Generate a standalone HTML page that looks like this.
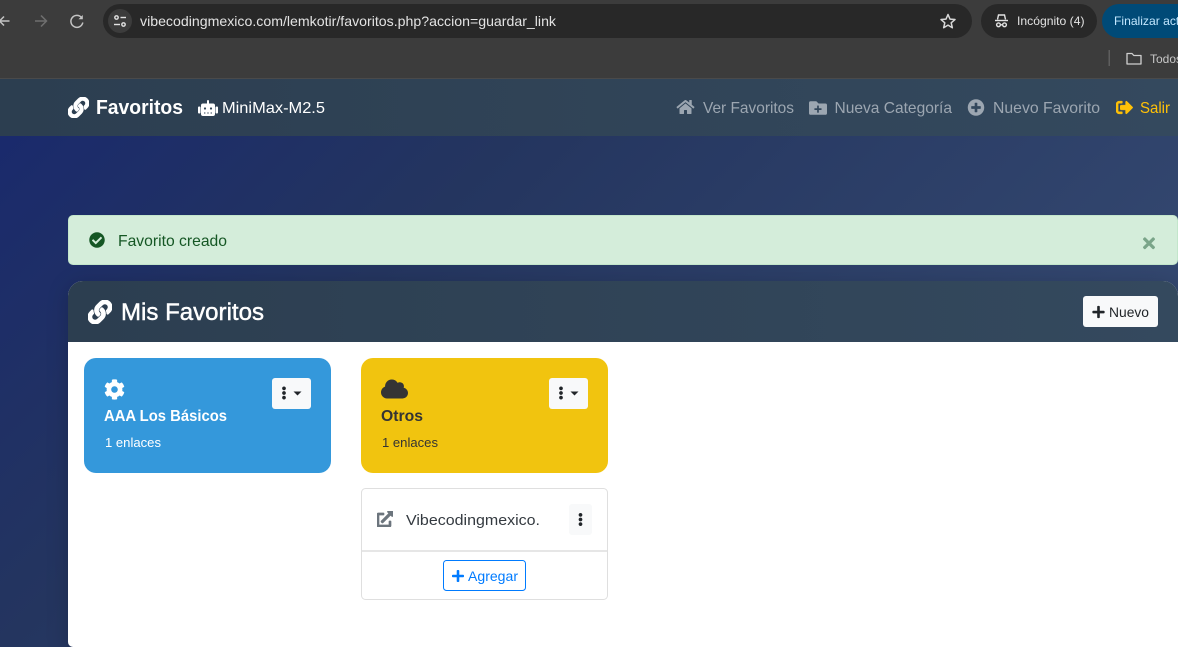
<!DOCTYPE html>
<html lang="es">
<head>
<meta charset="utf-8">
<title>Favoritos</title>
<style>
html,body{margin:0;padding:0;width:1178px;height:647px;overflow:hidden;background:#1a2a6c}
svg{display:block}
text{font-family:"Liberation Sans",sans-serif;white-space:pre}
</style>
</head>
<body>
<svg xmlns="http://www.w3.org/2000/svg" width="1178" height="647" viewBox="0 0 1178 647">
<defs>
<linearGradient id="pg" gradientUnits="userSpaceOnUse" x1="0" y1="136" x2="800" y2="936">
<stop offset="0" stop-color="#1a2a6c"/><stop offset=".32" stop-color="#24355f"/><stop offset=".82" stop-color="#33476f"/><stop offset="1" stop-color="#3a4f75"/>
</linearGradient>
<linearGradient id="nv" gradientUnits="userSpaceOnUse" x1="0" y1="0" x2="1178" y2="0">
<stop offset="0" stop-color="#2c3e50"/><stop offset="1" stop-color="#34495e"/>
</linearGradient>
<linearGradient id="hd" gradientUnits="userSpaceOnUse" x1="68" y1="0" x2="1178" y2="0">
<stop offset="0" stop-color="#2c3e50"/><stop offset="1" stop-color="#34495e"/>
</linearGradient>
</defs>

<!-- browser chrome -->
<rect width="1178" height="79" fill="#3c3c3c"/>
<rect y="78" width="1178" height="1" fill="#4a4a4a"/>
<path d="M9.5 21H0M4 16.5L-.5 21 4 25.5" fill="none" stroke="#c4c4c4" stroke-width="1.5"/>
<path d="M35 21H46M41 15.5L46.5 21 41 26.5" fill="none" stroke="#6f6f6f" stroke-width="1.5"/>
<path d="M81.5 17.5A6 6 0 1 0 82.8 22.5" fill="none" stroke="#c4c4c4" stroke-width="1.5"/>
<path d="M82.8 15V19.3H78.5Z" fill="#c4c4c4"/>
<rect x="103" y="4" width="869" height="34" rx="17" fill="#282828"/>
<circle cx="120" cy="21" r="12" fill="#3c3c3c"/>
<g fill="none" stroke="#e3e3e3" stroke-width="1.4"><circle cx="116.5" cy="17.5" r="1.7"/><path d="M120.5 17.5H126"/><circle cx="123.5" cy="24.5" r="1.7"/><path d="M114 24.5H120"/></g>
<text x="140" y="26" font-size="14" fill="#e3e3e3" textLength="416" lengthAdjust="spacingAndGlyphs">vibecodingmexico.com/lemkotir/favoritos.php?accion=guardar_link</text>
<path d="M948 14.5l2 4.600 5 .45-3.800 3.300 1.150 4.900L948 25.150l-4.350 2.600 1.150-4.900-3.800-3.300 5-.45z" fill="none" stroke="#d8d8d8" stroke-width="1.5" stroke-linejoin="round"/>
<rect x="981" y="4" width="116" height="34" rx="17" fill="#282828"/>
<g fill="none" stroke="#e3e3e3" stroke-width="1.4"><path d="M997.5 19.5l1-4.500h6l1 4.500"/><path d="M995 20.5H1008"/><circle cx="998.5" cy="24.8" r="1.9"/><circle cx="1004.5" cy="24.8" r="1.9"/><path d="M1000.3 24.8h2.400"/></g>
<text x="1017" y="25" font-size="12" fill="#e3e3e3" textLength="67.5" lengthAdjust="spacingAndGlyphs">Incógnito (4)</text>
<rect x="1102" y="4" width="110" height="34" rx="17" fill="#004a77"/>
<text x="1114" y="25" font-size="12" fill="#c2e7ff" textLength="72" lengthAdjust="spacingAndGlyphs">Finalizar actu</text>
<rect x="1108.5" y="50" width="1.5" height="16" fill="#5e5e5e"/>
<path d="M1127 53.5h5l1.800 2h7.200v8.500h-14z" fill="none" stroke="#cfcfcf" stroke-width="1.3" stroke-linejoin="round"/>
<text x="1150" y="63" font-size="12" fill="#c7c7c7" textLength="32" lengthAdjust="spacingAndGlyphs">Todos</text>

<!-- navbar -->
<rect y="79" width="1178" height="57" fill="url(#nv)"/>
<svg x="68" y="97" width="21" height="21" viewBox="0 0 512 512"><path fill="#fff" stroke="#fff" stroke-width="22" d="M326.612 185.391c59.747 59.809 58.927 155.698.36 214.59-.11.12-.24.25-.36.37l-67.2 67.2c-59.27 59.27-155.699 59.262-214.96 0-59.27-59.26-59.27-155.7 0-214.96l37.106-37.106c9.84-9.84 26.786-3.3 27.294 10.606.648 17.722 3.826 35.527 9.69 52.721 1.986 5.822.567 12.262-3.783 16.612l-13.087 13.087c-28.026 28.026-28.905 73.66-1.155 101.96 28.024 28.579 74.086 28.749 102.325.51l67.2-67.19c28.191-28.191 28.073-73.757 0-101.83-3.701-3.694-7.429-6.564-10.341-8.569a16.037 16.037 0 0 1-6.947-12.606c-.396-10.567 3.348-21.456 11.698-29.806l21.054-21.055c5.521-5.521 14.182-6.199 20.584-1.731a152.482 152.482 0 0 1 20.522 17.197zM467.547 44.449c-59.261-59.262-155.69-59.27-214.96 0l-67.2 67.2c-.12.12-.25.25-.36.37-58.566 58.892-59.387 154.781.36 214.59a152.454 152.454 0 0 0 20.521 17.196c6.402 4.468 15.064 3.789 20.584-1.731l21.054-21.055c8.35-8.35 12.094-19.239 11.698-29.806a16.037 16.037 0 0 0-6.947-12.606c-2.912-2.005-6.64-4.875-10.341-8.569-28.073-28.073-28.191-73.639 0-101.83l67.2-67.19c28.239-28.239 74.3-28.069 102.325.51 27.75 28.3 26.872 73.934-1.155 101.96l-13.087 13.087c-4.35 4.35-5.769 10.79-3.783 16.612 5.864 17.194 9.042 34.999 9.69 52.721.509 13.906 17.454 20.446 27.294 10.606l37.106-37.106c59.271-59.259 59.271-155.699.001-214.959z"/></svg>
<text x="96" y="114" font-size="20" font-weight="700" fill="#fff" textLength="87" lengthAdjust="spacingAndGlyphs">Favoritos</text>
<!-- robot -->
<rect x="198" y="106.500" width="2.500" height="7" rx="1" fill="#fff"/>
<rect x="215.500" y="106.500" width="2.500" height="7" rx="1" fill="#fff"/>
<rect x="207" y="100" width="2" height="5" rx="1" fill="#fff"/>
<rect x="201" y="103.500" width="14" height="12.500" rx="2" fill="#fff"/>
<circle cx="205" cy="108.500" r="1.100" fill="#2f4253"/>
<circle cx="211" cy="108.500" r="1.100" fill="#2f4253"/>
<rect x="204" y="112.500" width="1.400" height="1" fill="#2f4253"/><rect x="207.300" y="112.500" width="1.400" height="1" fill="#2f4253"/><rect x="210.600" y="112.500" width="1.400" height="1" fill="#2f4253"/>
<text x="222" y="113" font-size="16" fill="#fff" textLength="103" lengthAdjust="spacingAndGlyphs">MiniMax-M2.5</text>

<svg x="676" y="99" width="19" height="16" viewBox="0 0 576 512"><path fill="#9ca6b1" d="M280.37 148.26L96 300.11V464a16 16 0 0 0 16 16l112.06-.29a16 16 0 0 0 15.92-16V368a16 16 0 0 1 16-16h64a16 16 0 0 1 16 16v95.64a16 16 0 0 0 16 16.05L464 480a16 16 0 0 0 16-16V300L295.67 148.26a12.19 12.19 0 0 0-15.3 0zM571.6 251.47L488 182.56V44.05a12 12 0 0 0-12-12h-56a12 12 0 0 0-12 12v72.61L318.47 43a48 48 0 0 0-61 0L4.34 251.47a12 12 0 0 0-1.6 16.9l25.5 31A12 12 0 0 0 45.15 301l235.22-193.74a12.19 12.19 0 0 1 15.3 0L530.9 301a12 12 0 0 0 16.9-1.6l25.5-31a12 12 0 0 0-1.7-16.93z"/></svg>
<text x="703" y="113" font-size="16" fill="#9ca6b1" textLength="91" lengthAdjust="spacingAndGlyphs">Ver Favoritos</text>
<svg x="809" y="99" width="18" height="18" viewBox="0 0 512 512"><path fill="#9ca6b1" d="M464,128H272L208,64H48A48,48,0,0,0,0,112V400a48,48,0,0,0,48,48H464a48,48,0,0,0,48-48V176A48,48,0,0,0,464,128ZM359.5,296a16,16,0,0,1-16,16h-64v64a16,16,0,0,1-16,16h-16a16,16,0,0,1-16-16V312h-64a16,16,0,0,1-16-16V280a16,16,0,0,1,16-16h64V200a16,16,0,0,1,16-16h16a16,16,0,0,1,16,16v64h64a16,16,0,0,1,16,16Z"/></svg>
<text x="834.5" y="113" font-size="16" fill="#9ca6b1" textLength="117.5" lengthAdjust="spacingAndGlyphs">Nueva Categoría</text>
<svg x="967.5" y="99" width="17" height="17" viewBox="0 0 512 512"><path fill="#9ca6b1" d="M256 8C119 8 8 119 8 256s111 248 248 248 248-111 248-248S393 8 256 8zm144 276c0 6.600-5.400 12-12 12h-92v92c0 6.600-5.400 12-12 12h-56c-6.600 0-12-5.400-12-12v-92h-92c-6.600 0-12-5.400-12-12v-56c0-6.600 5.400-12 12-12h92v-92c0-6.600 5.400-12 12-12h56c6.600 0 12 5.400 12 12v92h92c6.600 0 12 5.400 12 12v56z"/></svg>
<text x="993" y="113" font-size="16" fill="#9ca6b1" textLength="107" lengthAdjust="spacingAndGlyphs">Nuevo Favorito</text>
<svg x="1116" y="99" width="17" height="17" viewBox="0 0 512 512"><path fill="#ffc107" stroke="#ffc107" stroke-width="14" d="M497 273L329 441c-15 15-41 4.500-41-17v-96H152c-13.300 0-24-10.700-24-24v-96c0-13.300 10.700-24 24-24h136V88c0-21.400 25.900-32 41-17l168 168c9.300 9.400 9.300 24.600 0 34zM192 436v-40c0-6.600-5.400-12-12-12H96c-17.700 0-32-14.300-32-32V160c0-17.700 14.300-32 32-32h84c6.600 0 12-5.400 12-12V76c0-6.600-5.400-12-12-12H96c-53 0-96 43-96 96v192c0 53 43 96 96 96h84c6.600 0 12-5.400 12-12z"/></svg>
<text x="1140" y="113" font-size="16" fill="#ffc107" textLength="30" lengthAdjust="spacingAndGlyphs">Salir</text>

<!-- page background -->
<rect y="136" width="1178" height="511" fill="url(#pg)"/>

<!-- alert -->
<rect x="68.5" y="215.5" width="1109" height="49" rx="4.5" fill="#d4edda" stroke="#c3e6cb"/>
<svg x="89" y="232" width="16" height="16" viewBox="0 0 512 512"><path fill="#155724" d="M504 256c0 136.967-111.033 248-248 248S8 392.967 8 256 119.033 8 256 8s248 111.033 248 248zM227.314 387.314l184-184c6.248-6.248 6.248-16.379 0-22.627l-22.627-22.627c-6.248-6.249-16.379-6.249-22.628 0L216 308.118l-70.059-70.059c-6.248-6.248-16.379-6.248-22.628 0l-22.627 22.627c-6.248 6.248-6.248 16.379 0 22.627l104 104c6.249 6.249 16.379 6.249 22.628.001z"/></svg>
<text x="118" y="246" font-size="16" fill="#155724" textLength="109" lengthAdjust="spacingAndGlyphs">Favorito creado</text>
<svg x="1143" y="234.500" width="12" height="17.500" viewBox="0 0 352 512"><path fill="#7aa589" d="M242.720 256l100.070-100.070c12.280-12.280 12.280-32.190 0-44.480l-22.240-22.240c-12.280-12.280-32.190-12.280-44.480 0L176 189.280 75.930 89.210c-12.280-12.280-32.190-12.280-44.480 0L9.210 111.450c-12.280 12.280-12.280 32.190 0 44.480L109.280 256 9.210 356.070c-12.280 12.280-12.280 32.190 0 44.480l22.240 22.240c12.280 12.280 32.200 12.280 44.480 0L176 322.720l100.070 100.070c12.280 12.280 32.200 12.280 44.480 0l22.240-22.240c12.280-12.280 12.280-32.190 0-44.480L242.720 256z"/></svg>

<!-- main card -->
<path d="M68 296a15 15 0 0 1 15-15H1163a15 15 0 0 1 15 15V647H73a5 5 0 0 1-5-5z" fill="#fff" style="filter:drop-shadow(0 4px 10px rgba(0,0,0,.18))"/>
<path d="M68 342V296a15 15 0 0 1 15-15H1163a15 15 0 0 1 15 15V342z" fill="url(#hd)"/>
<svg x="88" y="300" width="24" height="24" viewBox="0 0 512 512"><path fill="#fff" stroke="#fff" stroke-width="20" d="M326.612 185.391c59.747 59.809 58.927 155.698.36 214.59-.11.12-.24.25-.36.37l-67.2 67.2c-59.27 59.27-155.699 59.262-214.96 0-59.27-59.26-59.27-155.7 0-214.96l37.106-37.106c9.84-9.84 26.786-3.3 27.294 10.606.648 17.722 3.826 35.527 9.69 52.721 1.986 5.822.567 12.262-3.783 16.612l-13.087 13.087c-28.026 28.026-28.905 73.66-1.155 101.96 28.024 28.579 74.086 28.749 102.325.51l67.2-67.19c28.191-28.191 28.073-73.757 0-101.83-3.701-3.694-7.429-6.564-10.341-8.569a16.037 16.037 0 0 1-6.947-12.606c-.396-10.567 3.348-21.456 11.698-29.806l21.054-21.055c5.521-5.521 14.182-6.199 20.584-1.731a152.482 152.482 0 0 1 20.522 17.197zM467.547 44.449c-59.261-59.262-155.69-59.27-214.96 0l-67.2 67.2c-.12.12-.25.25-.36.37-58.566 58.892-59.387 154.781.36 214.59a152.454 152.454 0 0 0 20.521 17.196c6.402 4.468 15.064 3.789 20.584-1.731l21.054-21.055c8.35-8.35 12.094-19.239 11.698-29.806a16.037 16.037 0 0 0-6.947-12.606c-2.912-2.005-6.64-4.875-10.341-8.569-28.073-28.073-28.191-73.639 0-101.83l67.2-67.19c28.239-28.239 74.3-28.069 102.325.51 27.75 28.3 26.872 73.934-1.155 101.96l-13.087 13.087c-4.35 4.35-5.769 10.79-3.783 16.612 5.864 17.194 9.042 34.999 9.69 52.721.509 13.906 17.454 20.446 27.294 10.606l37.106-37.106c59.271-59.259 59.271-155.699.001-214.959z"/></svg>
<text x="121" y="320" font-size="24" fill="#fff" stroke="#fff" stroke-width=".45" textLength="143" lengthAdjust="spacingAndGlyphs">Mis Favoritos</text>
<rect x="1083" y="296" width="75" height="31" rx="3" fill="#f8f9fa"/>
<svg x="1092" y="305" width="13" height="14" viewBox="0 0 448 512"><path fill="#212529" d="M416 208H272V64c0-17.670-14.330-32-32-32h-32c-17.670 0-32 14.330-32 32v144H32c-17.670 0-32 14.330-32 32v32c0 17.670 14.330 32 32 32h144v144c0 17.670 14.330 32 32 32h32c17.670 0 32-14.330 32-32V304h144c17.670 0 32-14.330 32-32v-32c0-17.670-14.330-32-32-32z"/></svg>
<text x="1109" y="317" font-size="14" fill="#212529" textLength="40" lengthAdjust="spacingAndGlyphs">Nuevo</text>

<!-- blue category -->
<rect x="84" y="358" width="247" height="115" rx="12" fill="#3498db"/>
<svg x="104" y="379" width="21" height="21" viewBox="0 0 512 512"><path fill="#fff" d="M487.400 315.700l-42.600-24.600c4.300-23.200 4.300-47 0-70.200l42.600-24.600c4.900-2.800 7.100-8.600 5.500-14-11.100-35.600-30-67.800-54.700-94.600-3.800-4.100-10-5.100-14.800-2.300L380.800 110c-17.900-15.400-38.500-27.300-60.800-35.100V25.800c0-5.600-3.900-10.500-9.400-11.700-36.700-8.200-74.300-7.800-109.200 0-5.500 1.200-9.400 6.100-9.400 11.700V75c-22.200 7.900-42.800 19.800-60.800 35.100L88.700 85.500c-4.900-2.800-11-1.900-14.800 2.300-24.700 26.700-43.600 58.900-54.700 94.600-1.700 5.400.6 11.200 5.500 14L67.300 221c-4.300 23.200-4.300 47 0 70.200l-42.600 24.600c-4.900 2.800-7.100 8.600-5.500 14 11.100 35.600 30 67.800 54.700 94.600 3.800 4.100 10 5.100 14.800 2.300l42.600-24.600c17.900 15.400 38.500 27.300 60.800 35.100v49.200c0 5.600 3.900 10.500 9.400 11.700 36.700 8.200 74.300 7.800 109.200 0 5.500-1.200 9.400-6.100 9.400-11.700v-49.200c22.200-7.900 42.800-19.800 60.800-35.100l42.600 24.600c4.900 2.800 11 1.900 14.800-2.300 24.700-26.700 43.600-58.900 54.700-94.600 1.500-5.500-.7-11.300-5.600-14.100zM256 336c-44.100 0-80-35.900-80-80s35.900-80 80-80 80 35.900 80 80-35.900 80-80 80z"/></svg>
<text x="104" y="421" font-size="16" font-weight="700" fill="#fff" textLength="123" lengthAdjust="spacingAndGlyphs">AAA Los Básicos</text>
<text x="105" y="447" font-size="13" fill="#fff" textLength="56" lengthAdjust="spacingAndGlyphs">1 enlaces</text>
<rect x="272" y="378" width="39" height="31" rx="3" fill="#f8f9fa"/>
<svg x="281.5" y="386" width="5" height="14" viewBox="0 0 192 512"><path fill="#212529" d="M96 184c39.800 0 72 32.200 72 72s-32.200 72-72 72-72-32.200-72-72 32.200-72 72-72zM24 80c0 39.800 32.200 72 72 72s72-32.200 72-72S135.800 8 96 8 24 40.200 24 80zm0 352c0 39.800 32.200 72 72 72s72-32.200 72-72-32.200-72-72-72-72 32.200-72 72z"/></svg>
<path d="M293.500 391.500h8l-4 4z" fill="#212529"/>

<!-- yellow category -->
<rect x="361" y="358" width="247" height="115" rx="12" fill="#f1c40f"/>
<svg x="381" y="378" width="27" height="22" viewBox="0 0 640 512"><path fill="#343434" d="M537.600 226.600c4.100-10.700 6.400-22.400 6.400-34.600 0-53-43-96-96-96-19.700 0-38.100 6-53.300 16.200C367 64.200 315.300 32 256 32c-88.400 0-160 71.600-160 160 0 2.700.1 5.400.2 8.100C40.200 219.800 0 273.200 0 336c0 79.500 64.500 144 144 144h368c70.700 0 128-57.300 128-128 0-61.900-44-113.600-102.400-125.400z"/></svg>
<text x="381" y="421" font-size="16" font-weight="700" fill="#343434" textLength="42" lengthAdjust="spacingAndGlyphs">Otros</text>
<text x="382" y="447" font-size="13" fill="#343434" textLength="56" lengthAdjust="spacingAndGlyphs">1 enlaces</text>
<rect x="549" y="378" width="39" height="31" rx="3" fill="#f8f9fa"/>
<svg x="558.5" y="386" width="5" height="14" viewBox="0 0 192 512"><path fill="#212529" d="M96 184c39.800 0 72 32.200 72 72s-32.200 72-72 72-72-32.200-72-72 32.200-72 72-72zM24 80c0 39.800 32.200 72 72 72s72-32.200 72-72S135.800 8 96 8 24 40.200 24 80zm0 352c0 39.800 32.200 72 72 72s72-32.200 72-72-32.200-72-72-72-72 32.200-72 72z"/></svg>
<path d="M570.500 391.500h8l-4 4z" fill="#212529"/>

<!-- link card -->
<rect x="361.5" y="488.5" width="246" height="111" rx="4" fill="#fff" stroke="#dfdfdf"/>
<rect x="362" y="550" width="245" height="2" fill="#e6e6e6"/>
<svg x="377" y="511" width="16" height="16" viewBox="0 0 512 512"><path fill="#6c757d" stroke="#6c757d" stroke-width="22" d="M432,320H400a16,16,0,0,0-16,16V448H64V128H208a16,16,0,0,0,16-16V80a16,16,0,0,0-16-16H48A48,48,0,0,0,0,112V464a48,48,0,0,0,48,48H400a48,48,0,0,0,48-48V336A16,16,0,0,0,432,320ZM488,0h-128c-21.370,0-32.050,25.910-17,41l35.730,35.730L135,320.370a24,24,0,0,0,0,34L157.670,377a24,24,0,0,0,34,0L435.280,133.320,471,169c15,15,41,4.500,41-17V24A24,24,0,0,0,488,0Z"/></svg>
<text x="406" y="525" font-size="15" fill="#343a40" textLength="134" lengthAdjust="spacingAndGlyphs">Vibecodingmexico.</text>
<rect x="569" y="504" width="23" height="31" rx="3" fill="#f8f9fa"/>
<svg x="578" y="512" width="5" height="15" viewBox="0 0 192 512"><path fill="#212529" d="M96 184c39.800 0 72 32.200 72 72s-32.200 72-72 72-72-32.200-72-72 32.200-72 72-72zM24 80c0 39.800 32.200 72 72 72s72-32.200 72-72S135.800 8 96 8 24 40.200 24 80zm0 352c0 39.800 32.200 72 72 72s72-32.200 72-72-32.200-72-72-72-72 32.200-72 72z"/></svg>
<rect x="443.5" y="560.5" width="82" height="30" rx="3" fill="#fff" stroke="#007bff"/>
<svg x="452" y="569" width="12" height="14" viewBox="0 0 448 512"><path fill="#007bff" d="M416 208H272V64c0-17.670-14.330-32-32-32h-32c-17.670 0-32 14.330-32 32v144H32c-17.670 0-32 14.330-32 32v32c0 17.670 14.330 32 32 32h144v144c0 17.670 14.330 32 32 32h32c17.670 0 32-14.330 32-32V304h144c17.670 0 32-14.330 32-32v-32c0-17.670-14.330-32-32-32z"/></svg>
<text x="468" y="581" font-size="14" fill="#007bff" textLength="50" lengthAdjust="spacingAndGlyphs">Agregar</text>
</svg>
</body>
</html>
